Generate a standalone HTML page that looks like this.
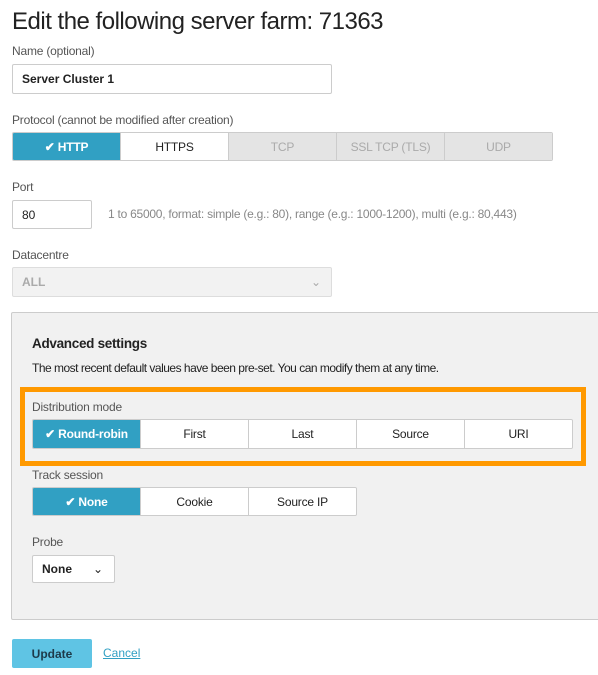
<!DOCTYPE html>
<html><head><style>
*{box-sizing:border-box;margin:0;padding:0}
body{width:598px;height:675px;background:#fff;font-family:"Liberation Sans",sans-serif;color:#222;position:relative;overflow:hidden;font-size:12px}
.a{position:absolute}
.lbl{color:#555;font-size:12px;letter-spacing:-0.2px}
.inp{border:1px solid #ccc;border-radius:2px;background:#fff;font-weight:bold;font-size:12px;padding-left:9px;display:flex;align-items:center}
.grp{display:flex;border:1px solid #ccc;border-radius:2px;overflow:hidden}
.grp div{width:108px;display:flex;align-items:center;justify-content:center;border-left:1px solid #ccc;background:#fff;font-size:12px;letter-spacing:-0.2px}
.grp div:first-child{border-left:none;width:107px}
.grp .on{background:#31a0c3;color:#fff;font-weight:bold}
.grp .dis{background:#e4e4e4;color:#aaa}
</style></head><body>
<div class="a" style="left:12px;top:8px;font-size:24px;letter-spacing:-0.5px;color:#222">Edit the following server farm: 71363</div>
<div class="a lbl" style="left:12px;top:44px">Name (optional)</div>
<div class="a inp" style="left:12px;top:64px;width:320px;height:30px">Server Cluster 1</div>
<div class="a lbl" style="left:12px;top:113px">Protocol (cannot be modified after creation)</div>
<div class="a grp" style="left:12px;top:132px;height:29px;width:541px">
<div class="on">✔ HTTP</div><div>HTTPS</div><div class="dis">TCP</div><div class="dis">SSL TCP (TLS)</div><div class="dis">UDP</div></div>
<div class="a lbl" style="left:12px;top:180px">Port</div>
<div class="a inp" style="left:12px;top:200px;width:80px;height:29px;font-weight:normal">80</div>
<div class="a" style="left:108px;top:207px;color:#888;font-size:12px;letter-spacing:-0.25px">1 to 65000, format: simple (e.g.: 80), range (e.g.: 1000-1200), multi (e.g.: 80,443)</div>
<div class="a lbl" style="left:12px;top:248px">Datacentre</div>
<div class="a inp" style="left:12px;top:267px;width:320px;height:30px;background:#f2f2f2;color:#aaa;border-color:#ddd">ALL<span style="position:absolute;right:10px;font-weight:normal;color:#aaa">⌄</span></div>
<div class="a" style="left:11px;top:312px;width:600px;height:308px;background:#f1f1f1;border:1px solid #ccc;border-radius:2px"></div>
<div class="a" style="left:32px;top:336px;font-weight:bold;font-size:13.5px;letter-spacing:-0.3px">Advanced settings</div>
<div class="a" style="left:32px;top:361px;font-size:12px;letter-spacing:-0.5px">The most recent default values have been pre-set. You can modify them at any time.</div>
<div class="a" style="left:20px;top:387px;width:566px;height:79px;border:5px solid #f90"></div>
<div class="a lbl" style="left:32px;top:400px">Distribution mode</div>
<div class="a grp" style="left:32px;top:419px;height:30px;width:541px">
<div class="on">✔ Round-robin</div><div>First</div><div>Last</div><div>Source</div><div>URI</div></div>
<div class="a lbl" style="left:32px;top:468px">Track session</div>
<div class="a grp" style="left:32px;top:487px;height:29px;width:325px">
<div class="on">✔ None</div><div>Cookie</div><div>Source IP</div></div>
<div class="a lbl" style="left:32px;top:535px">Probe</div>
<div class="a inp" style="left:32px;top:555px;width:83px;height:28px">None<span style="position:absolute;left:60px;font-weight:normal">⌄</span></div>
<div class="a" style="left:12px;top:639px;width:80px;height:29px;background:#5fc4e4;border-radius:2px;font-weight:bold;display:flex;align-items:center;justify-content:center;color:#1d3a4a">Update</div>
<div class="a" style="left:103px;top:646px;color:#31a0c3;text-decoration:underline">Cancel</div>
</body></html>
